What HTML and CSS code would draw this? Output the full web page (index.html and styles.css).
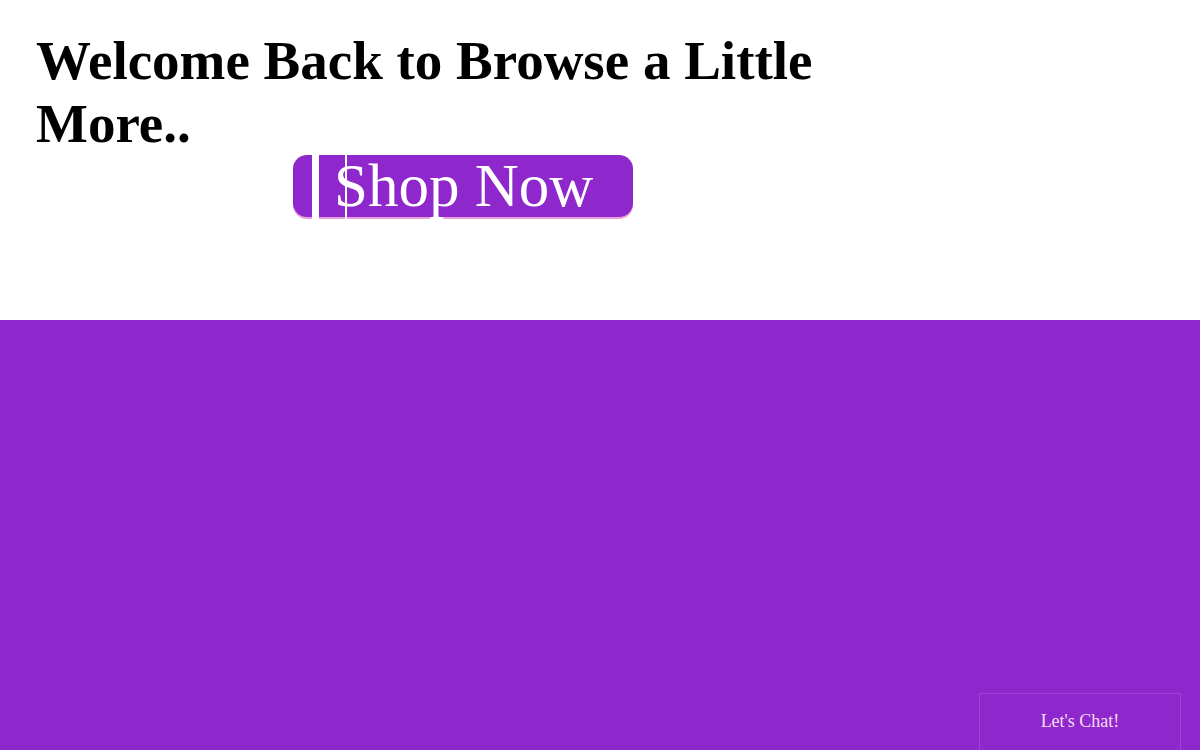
FILE: index.html
```html
<!DOCTYPE html>
<html>
<head>
<meta charset="utf-8">
<link rel="stylesheet" href="styles.css">
</head>
<body>
<section class="hero">
  <div class="hero-inner">
    <h1 class="title">Welcome Back to Browse a Little More..</h1>
    <div class="cta-row">
      <a class="shop-btn" href="#">
        <span class="stripe stripe-a"></span>
        <span class="shop-label">Shop Now</span>
        <span class="stripe stripe-b"></span>
      </a>
    </div>
  </div>
</section>
<section class="band"></section>
<div class="chat">Let's Chat!</div>
</body>
</html>
```
FILE: styles.css
```css
html, body {
  margin: 0;
  padding: 0;
  height: 100%;
  overflow: hidden;
}
body {
  font-family: "Liberation Serif", "Times New Roman", serif;
  background: #ffffff;
  display: flex;
  flex-direction: column;
}
.hero {
  height: 320px;
  flex: 0 0 auto;
  padding: 29px 0 0 36px;
  box-sizing: border-box;
}
.hero-inner {
  width: 854px;
  display: flex;
  flex-direction: column;
}
.title {
  margin: 0;
  font-size: 55px;
  font-weight: bold;
  line-height: 63px;
  color: #000;
}
.cta-row {
  display: flex;
  justify-content: center;
  margin-top: 0;
}
.shop-btn {
  position: relative;
  display: block;
  width: 340px;
  height: 62px;
  box-sizing: border-box;
  padding-left: 41px;
  background: #8e27cc;
  border-radius: 14px;
  box-shadow: 0 2px 0 #e9a0d8;
  color: #ffffff;
  text-decoration: none;
  font-family: "Liberation Serif", serif;
  font-size: 61px;
  line-height: 62px;
  white-space: nowrap;
}
.shop-label {
  position: relative;
}
.stripe {
  position: absolute;
  top: 0;
  bottom: -2px;
  background: #ffffff;
}
.stripe-a { left: 19px; width: 7px; }
.stripe-b { left: 52px; width: 2px; }
.band {
  flex: 1 1 auto;
  background: #8e27cc;
}
.chat {
  position: fixed;
  right: 19px;
  bottom: -10px;
  width: 202px;
  height: 67px;
  box-sizing: border-box;
  border: 1px solid #9b45d4;
  background: #8e27cc;
  color: #f6dcf6;
  font-size: 18px;
  display: flex;
  justify-content: center;
  padding-top: 17px;
}
```
